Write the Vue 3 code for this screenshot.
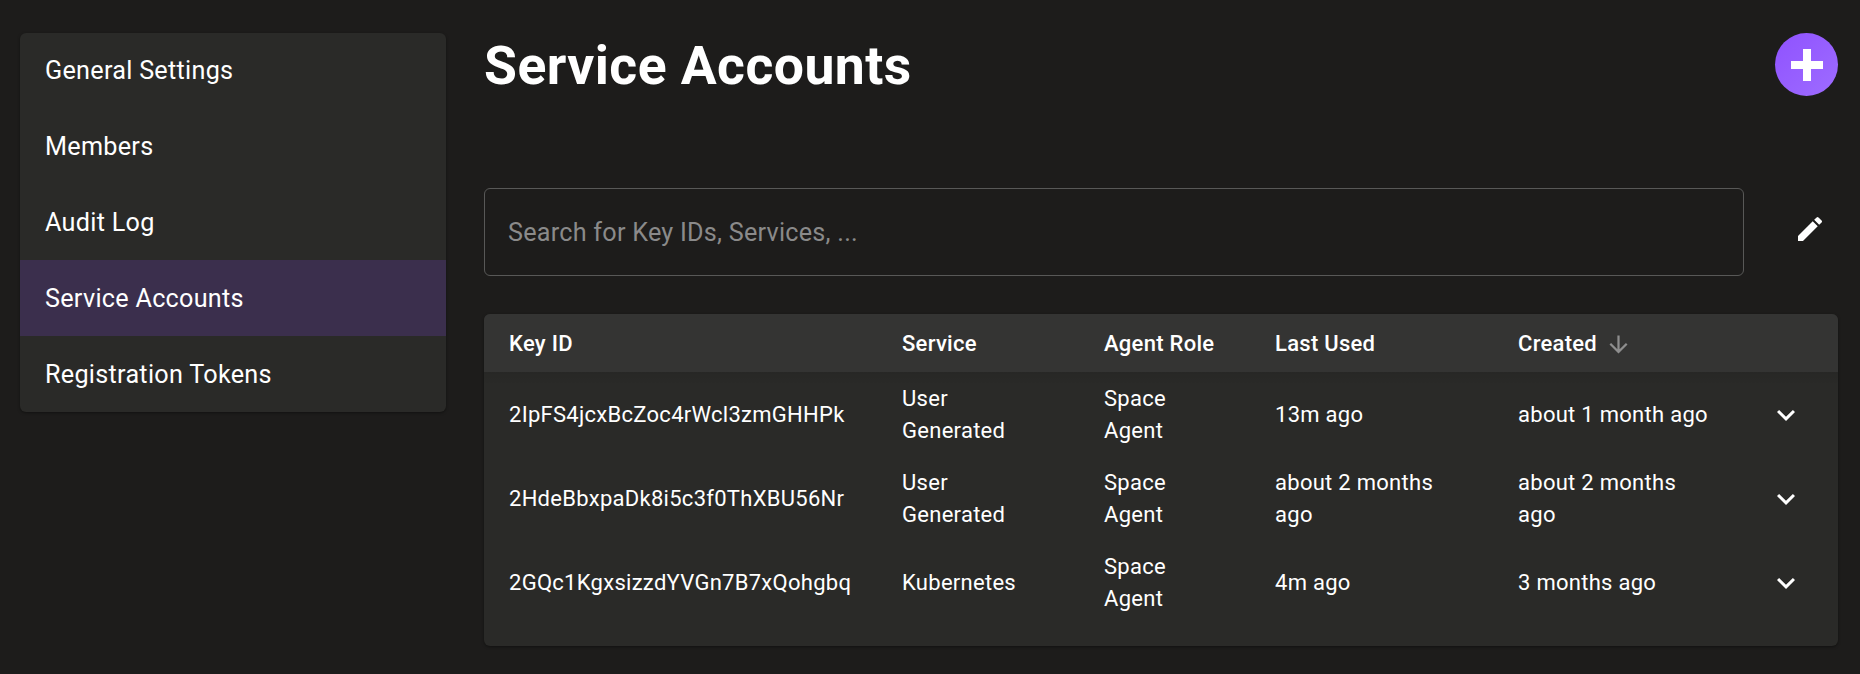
<template>
  <div class="page">
    <nav class="side">
      <div
        v-for="item in menu"
        :key="item"
        class="side-item"
        :class="{ active: item === 'Service Accounts' }">
        {{ item }}
      </div>
    </nav>

    <main class="content">
      <div class="head">
        <h1>Service Accounts</h1>
        <button class="add">
          <svg viewBox="0 0 32 32" width="32" height="32">
            <path d="M12 0h8v12h12v8H20v12h-8V20H0v-8h12z" fill="#fff" />
          </svg>
        </button>
      </div>

      <div class="search-row">
        <div class="search">Search for Key IDs, Services, ...</div>
        <button class="edit">
          <svg viewBox="0 0 24 24" width="32" height="32">
            <path fill="#fff" d="M3 17.250V21h3.750L17.810 9.940l-3.750-3.750L3 17.250zM20.710 7.040a.996.996 0 0 0 0-1.410l-2.340-2.340a.996.996 0 0 0-1.410 0l-1.830 1.830 3.750 3.750 1.830-1.830z" />
          </svg>
        </button>
      </div>

      <div class="card">
        <table>
          <colgroup>
            <col class="c1" /><col class="c2" /><col class="c3" /><col class="c4" /><col class="c5" /><col />
          </colgroup>
          <thead>
            <tr>
              <th>Key ID</th>
              <th>Service</th>
              <th>Agent Role</th>
              <th>Last Used</th>
              <th>
                <span class="sort">
                  Created
                  <svg viewBox="0 0 24 24" width="27" height="27">
                    <path fill="#8e8e8e" d="M20 12l-1.410-1.410L13 16.170V4h-2v12.170l-5.580-5.590L4 12l8 8 8-8z" />
                  </svg>
                </span>
              </th>
              <th></th>
            </tr>
          </thead>
          <tbody>
            <tr v-for="row in rows" :key="row.id">
              <td>{{ row.id }}</td>
              <td class="service">{{ row.service }}</td>
              <td>Space Agent</td>
              <td>{{ row.used }}</td>
              <td>{{ row.created }}</td>
              <td class="more">
                <svg viewBox="0 0 24 24" width="36" height="36">
                  <path fill="#fff" d="M7.410 8.590 12 13.170l4.590-4.580L18 10l-6 6-6-6z" />
                </svg>
              </td>
            </tr>
          </tbody>
        </table>
        <div class="head-shade"></div>
      </div>
    </main>
  </div>
</template>

<script setup>
const menu = ['General Settings', 'Members', 'Audit Log', 'Service Accounts', 'Registration Tokens'];

const rows = [
  { id: '2IpFS4jcxBcZoc4rWcl3zmGHHPk', service: 'User Generated', used: '13m ago', created: 'about 1 month ago' },
  { id: '2HdeBbxpaDk8i5c3f0ThXBU56Nr', service: 'User Generated', used: 'about 2 months ago', created: 'about 2 months ago' },
  { id: '2GQc1KgxsizzdYVGn7B7xQohgbq', service: 'Kubernetes', used: '4m ago', created: '3 months ago' }
];
</script>

<style>
html, body {
  background: #1d1c1b;
}
</style>

<style scoped>
.page {
  display: flex;
  align-items: flex-start;
  gap: 38px;
  height: 674px;
  padding: 33px 22px 0 20px;
  box-sizing: border-box;
  background: #1d1c1b;
  color: #fff;
  font-family: Roboto, sans-serif;
  overflow: hidden;
}

.side {
  flex: 0 0 426px;
  background: #2a2a28;
  border-radius: 6px;
  overflow: hidden;
  box-shadow: 0 1px 3px rgba(0, 0, 0, 0.4);
}

.side-item {
  height: 75.8px;
  padding: 0 25px;
  display: flex;
  align-items: center;
  font-size: 25.2px;
  letter-spacing: 0.28px;
}

.side-item.active {
  background: #3b2f4d;
}

.content {
  flex: 1;
  min-width: 0;
}

.head {
  display: flex;
  justify-content: space-between;
  align-items: flex-start;
  height: 155px;
}

h1 {
  margin: 0;
  font-size: 53.5px;
  font-weight: 700;
  line-height: 66px;
  letter-spacing: 0.44px;
}

.add {
  width: 63px;
  height: 63px;
  padding: 0;
  border: 0;
  border-radius: 50%;
  background: linear-gradient(135deg, #8f52ff, #9e6cff);
  display: flex;
  align-items: center;
  justify-content: center;
}

.search-row {
  display: flex;
  align-items: center;
  gap: 38px;
  margin-bottom: 38px;
}

.search {
  flex: 1;
  height: 88px;
  box-sizing: border-box;
  padding: 0 23px;
  display: flex;
  align-items: center;
  border: 1px solid #585857;
  border-radius: 6px;
  color: #8a8a8a;
  font-size: 25.2px;
  letter-spacing: 0.24px;
}

.edit {
  width: 56px;
  height: 56px;
  margin-bottom: 6px;
  padding: 0;
  border: 0;
  background: none;
  display: flex;
  align-items: center;
  justify-content: center;
}

.card {
  position: relative;
  background: #2a2a28;
  border-radius: 6px;
  overflow: hidden;
  padding-bottom: 22px;
  box-shadow: 0 1px 3px rgba(0, 0, 0, 0.4);
}

.head-shade {
  position: absolute;
  top: 58px;
  left: 0;
  right: 0;
  height: 11px;
  background: linear-gradient(rgba(0, 0, 0, 0.07), rgba(0, 0, 0, 0.02));
}

table {
  width: 100%;
  border-collapse: collapse;
  table-layout: fixed;
  font-size: 22px;
  line-height: 32px;
  letter-spacing: 0.28px;
}

.c1 { width: 394px; }
.c2 { width: 202px; }
.c3 { width: 171px; }
.c4 { width: 243px; }
.c5 { width: 240px; }

th {
  height: 58px;
  box-sizing: border-box;
  padding: 2px 24px 0;
  background: #343433;
  text-align: left;
  font-weight: 500;
}

td {
  height: 84px;
  padding: 11px 24px 9px;
  box-sizing: border-box;
  font-weight: 400;
}

th:first-child,
td:first-child {
  padding-left: 25px;
}

td.service {
  padding-right: 40px;
}

.sort {
  display: inline-flex;
  align-items: center;
  gap: 8px;
}

td.more {
  padding: 2px 0 0;
}

.more svg {
  display: block;
  margin: 0 auto;
}
</style>
